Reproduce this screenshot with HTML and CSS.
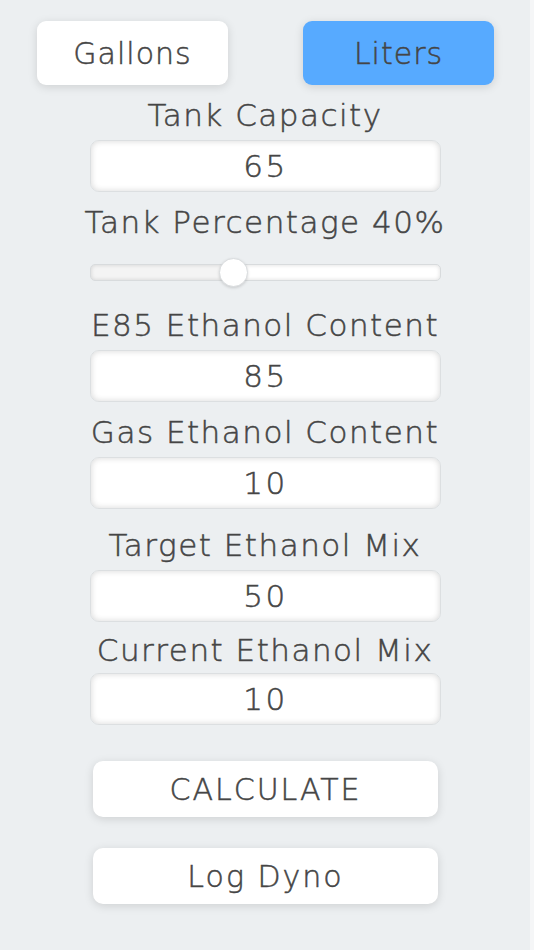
FILE: index.html
```html
<!DOCTYPE html>
<html lang="en">
<head>
<meta charset="utf-8">
<title>Ethanol Mix Calculator</title>
<link rel="stylesheet" href="styles.css">
</head>
<body>
<main class="app">
  <div class="units">
    <button class="unit">Gallons</button>
    <button class="unit active">Liters</button>
  </div>
  <div class="field">
    <label class="label">Tank Capacity</label>
    <input class="input" type="text" value="65">
  </div>
  <div class="field">
    <label class="label">Tank Percentage 40%</label>
    <input class="slider" type="range" min="0" max="100" value="40">
  </div>
  <div class="field">
    <label class="label">E85 Ethanol Content</label>
    <input class="input" type="text" value="85">
  </div>
  <div class="field">
    <label class="label">Gas Ethanol Content</label>
    <input class="input" type="text" value="10">
  </div>
  <div class="field spaced">
    <label class="label">Target Ethanol Mix</label>
    <input class="input" type="text" value="50">
  </div>
  <div class="field tight">
    <label class="label">Current Ethanol Mix</label>
    <input class="input" type="text" value="10">
  </div>
  <div class="actions">
    <button class="action">CALCULATE</button>
    <button class="action">Log Dyno</button>
  </div>
</main>
</body>
</html>
```
FILE: styles.css
```css
html {
  background: #f5f6f7;
}
body {
  margin: 0;
  font-family: "DejaVu Sans", "Liberation Sans", sans-serif;
  font-weight: 200;
  color: #454545;
}
.app {
  width: 530px;
  min-height: 950px;
  box-sizing: border-box;
  background: #eceff1;
  padding-top: 21px;
  display: flex;
  flex-direction: column;
  align-items: center;
}
.units {
  display: flex;
  gap: 75px;
  margin-left: 1px;
}
.unit {
  width: 191px;
  height: 64px;
  border: none;
  border-radius: 9px;
  background: #ffffff;
  box-shadow: 0 2px 10px rgba(0, 0, 0, 0.13);
  font-family: inherit;
  font-weight: inherit;
  font-size: 30px;
  letter-spacing: 1px;
  color: #454545;
  -webkit-text-stroke: 0.5px #454545;
  padding: 0;
}
.unit.active {
  background: #57aaff;
}
.field {
  display: flex;
  flex-direction: column;
  align-items: center;
  gap: 7px;
  margin-top: 12px;
}
.field.spaced {
  margin-top: 18px;
}
.field.tight {
  margin-top: 10px;
}
.field.tight .input {
  margin-top: -2px;
}
.label {
  font-size: 31px;
  line-height: 36px;
  letter-spacing: 1.5px;
  white-space: nowrap;
  -webkit-text-stroke: 0.5px #454545;
}
.input {
  width: 351px;
  height: 52px;
  box-sizing: border-box;
  border: 1px solid #dcdfe1;
  border-radius: 9px;
  background: #ffffff;
  box-shadow: inset 0 0 6px rgba(0, 0, 0, 0.16);
  text-align: center;
  font-family: inherit;
  font-weight: inherit;
  font-size: 31px;
  letter-spacing: 2.5px;
  color: #454545;
  -webkit-text-stroke: 0.5px #454545;
  padding: 0;
  margin-left: 1px;
}
.slider {
  -webkit-appearance: none;
  appearance: none;
  width: 351px;
  height: 32px;
  margin: 9px 0 7px 2px;
  background: transparent;
}
.slider::-webkit-slider-runnable-track {
  height: 17px;
  border-radius: 5px;
  background: linear-gradient(to right, #f4f4f4 40%, #ffffff 40%);
  border: 1px solid #d8dbdd;
  box-shadow: inset 0 0 4px rgba(0, 0, 0, 0.14);
  box-sizing: border-box;
}
.slider::-webkit-slider-thumb {
  -webkit-appearance: none;
  appearance: none;
  width: 29px;
  height: 29px;
  margin-top: -7px;
  border-radius: 50%;
  background: #ffffff;
  border: 1px solid #d9dcde;
  box-shadow: 0 1px 3px rgba(0, 0, 0, 0.15);
}
.actions {
  display: flex;
  flex-direction: column;
  align-items: center;
  gap: 31px;
  margin-top: 36px;
}
.action {
  width: 345px;
  height: 56px;
  border: none;
  border-radius: 10px;
  background: #ffffff;
  box-shadow: 0 2px 10px rgba(0, 0, 0, 0.13);
  font-family: inherit;
  font-weight: inherit;
  font-size: 30px;
  letter-spacing: 2px;
  color: #454545;
  -webkit-text-stroke: 0.5px #454545;
  padding: 0;
  margin-left: 1px;
}
```
